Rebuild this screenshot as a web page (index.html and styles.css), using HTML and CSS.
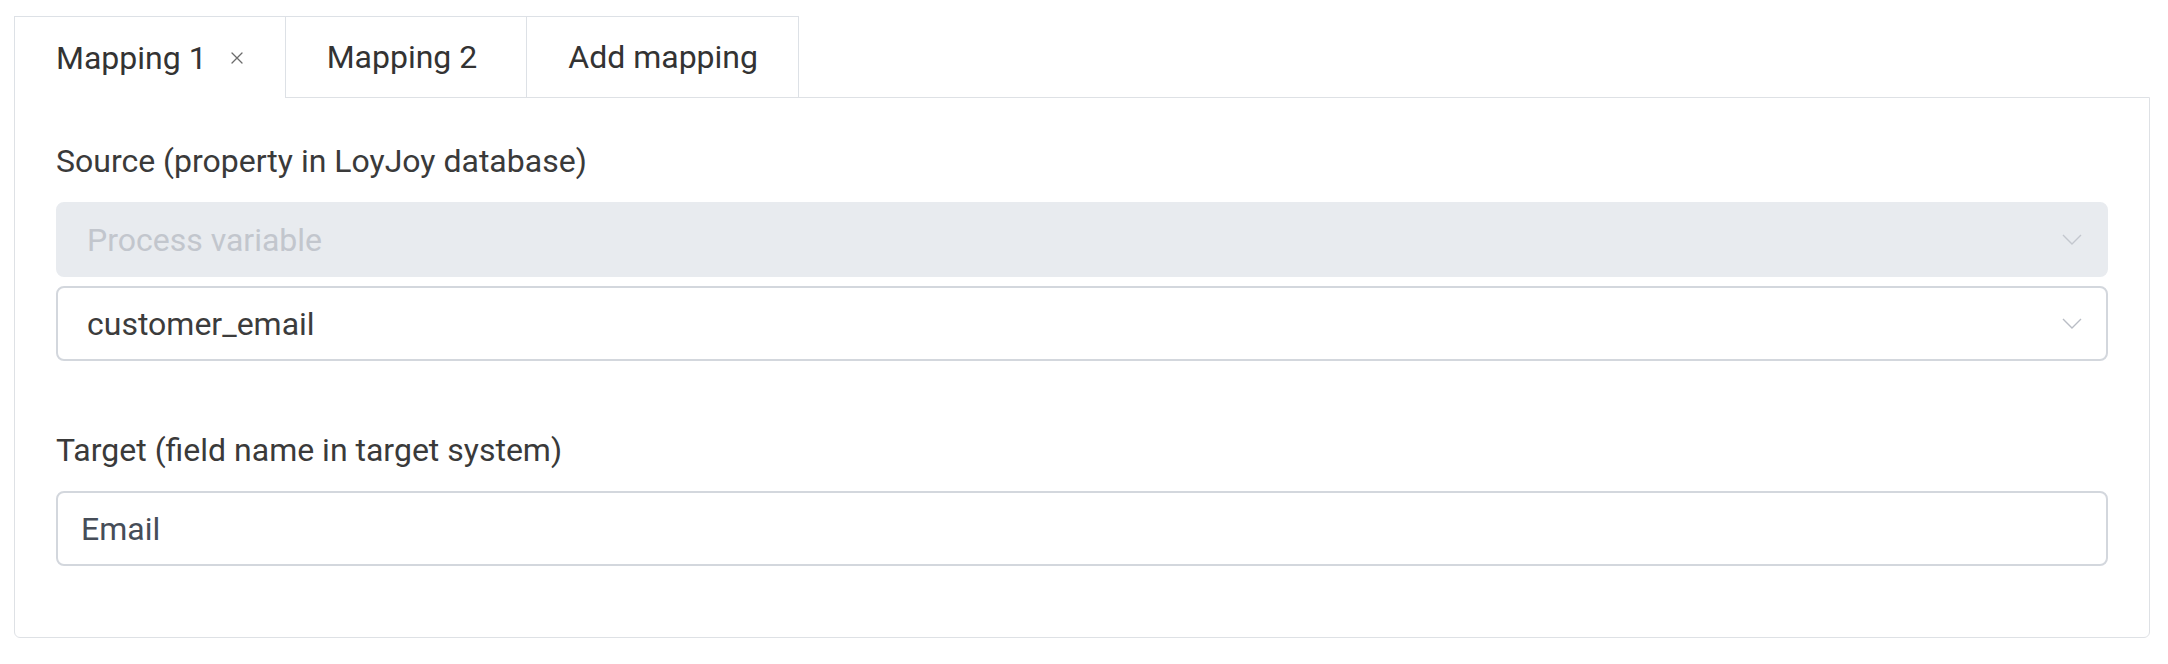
FILE: index.html
```html
<!DOCTYPE html>
<html lang="en">
<head>
<meta charset="utf-8">
<title>Mappings</title>
<link rel="stylesheet" href="styles.css">
</head>
<body>
<div class="wrap">
  <div class="tabs">
    <div class="tab tab--active">
      <span class="tab__label">Mapping 1</span>
      <svg class="tab__close" width="12" height="12" viewBox="0 0 12 12" aria-hidden="true">
        <path d="M1 1 L11 11 M11 1 L1 11" stroke="#6b6b6b" stroke-width="1.3" fill="none" stroke-linecap="round"/>
      </svg>
    </div>
    <div class="tab tab--second"><span class="tab__label">Mapping 2</span></div>
    <div class="tab tab--last"><span class="tab__label">Add mapping</span></div>
  </div>
  <div class="panel">
    <div class="field">
      <div class="field__label">Source (property in LoyJoy database)</div>
      <div class="select select--disabled">
        <span class="select__placeholder">Process variable</span>
        <svg class="chevron" width="20" height="11" viewBox="0 0 20 11" aria-hidden="true">
          <path d="M1 1 L10 10 L19 1" stroke="#c3c7ce" stroke-width="1.4" fill="none"/>
        </svg>
      </div>
      <div class="select select--second">
        <span class="select__value">customer_email</span>
        <svg class="chevron" width="20" height="11" viewBox="0 0 20 11" aria-hidden="true">
          <path d="M1 1 L10 10 L19 1" stroke="#b9bdc5" stroke-width="1.4" fill="none"/>
        </svg>
      </div>
    </div>
    <div class="field field--target">
      <div class="field__label">Target (field name in target system)</div>
      <div class="input">Email</div>
    </div>
  </div>
</div>
</body>
</html>
```

FILE: styles.css
```css
* { box-sizing: border-box; }

html, body {
  margin: 0;
  padding: 0;
  background: #ffffff;
}

body {
  font-family: Roboto, "Liberation Sans", sans-serif;
  font-size: 32px;
  line-height: 48px;
  color: #3a3a3a;
}

.wrap {
  padding: 16px 0 0 14px;
  width: 2150px;
}

.tabs {
  display: flex;
  align-items: flex-end;
}

.tab {
  display: flex;
  align-items: center;
  height: 81px;
  padding: 16px 40px;
  border-top: 1px solid #dde1e6;
  border-left: 1px solid #dde1e6;
  background: #ffffff;
  color: #333333;
  white-space: nowrap;
}

.tab--active {
  height: 82px;
  margin-bottom: -1px;
  padding-left: 41px;
  padding-right: 42px;
  position: relative;
  z-index: 1;
}

.tab--second {
  padding-left: 41px;
  padding-right: 49px;
}

.tab--last {
  border-right: 1px solid #dde1e6;
  padding-left: 41px;
  padding-right: 40px;
}

.tab__close {
  margin-left: 24px;
  display: block;
}

.panel {
  border: 1px solid #dee1e5;
  border-radius: 0 0 6px 6px;
  padding: 39px 41px 71px 41px;
}

.field__label {
  color: #3a3a3a;
  margin-bottom: 17px;
}

.field--target {
  margin-top: 65px;
}

.field--target .field__label {
  margin-bottom: 17px;
}

.select {
  display: flex;
  align-items: center;
  justify-content: space-between;
  height: 75px;
  padding: 0 24px 0 29px;
  border-radius: 8px;
  border: 2px solid #d3d7dd;
  background: #ffffff;
}

.select--disabled {
  background: #e8ebef;
  border-color: #e8ebef;
}

.select--second {
  margin-top: 9px;
}

.select__placeholder {
  color: #c2c6cd;
}

.select__value {
  color: #3c3c3c;
}

.chevron {
  display: block;
}

.input {
  display: flex;
  align-items: center;
  height: 75px;
  padding: 0 23px;
  border-radius: 8px;
  border: 2px solid #d3d7dd;
  color: #464d58;
}
```
